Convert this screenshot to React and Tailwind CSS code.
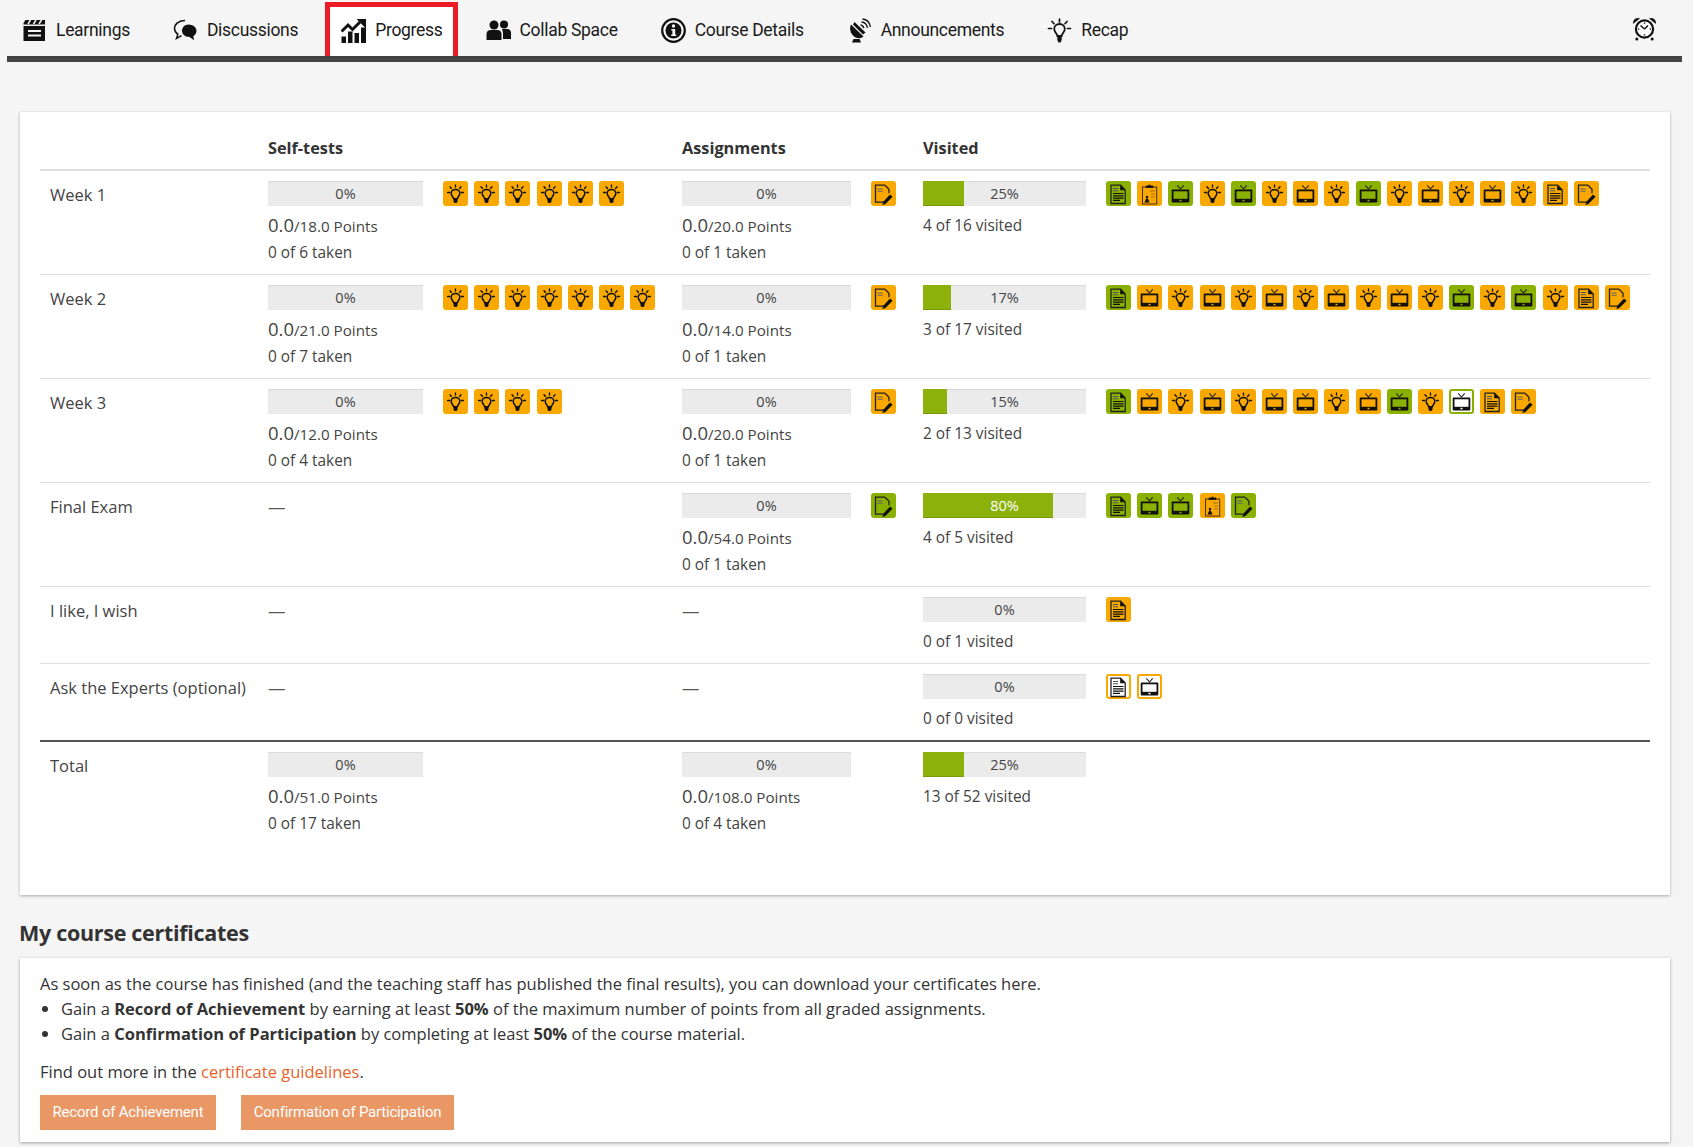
import React from 'react';

const BODY = "font-['Open_Sans',sans-serif]";

// tile colours: background plus an inset ring for the not yet available ones
const TILE = {
  o: 'bg-[#f9a800]',
  g: 'bg-[#8ab000]',
  w: 'bg-white shadow-[inset_0_0_0_2px_#f9a800]',
  x: 'bg-white shadow-[inset_0_0_0_2px_#8ab000]',
};

const Bulb = () => (
  <>
    <g stroke="#111" strokeWidth="1.3" strokeLinecap="round">
      <path d="M12.5 4v2.200M7 5.800l1.500 1.700M18 5.800l-1.500 1.700M4.500 11.500h2.300M18.200 11.500h2.300" />
    </g>
    <path d="M12.500 8.500c-2.500 0-4.300 1.800-4.300 3.900 0 2.300 2 3 2.400 5.300h3.800c.4-2.300 2.400-3 2.400-5.300 0-2.100-1.800-3.900-4.300-3.900z" fill="none" stroke="#111" strokeWidth="1.500" />
    <path d="M10.500 17.500h4v3l-1 1.500h-2l-1-1.500z" fill="#111" />
  </>
);

const Tv = ({ screen }) => (
  <>
    <path d="M9.300 4.300l3.200 3.700 3.200-3.700" fill="none" stroke="#222" strokeWidth="1.100" />
    <rect x="3.700" y="8.500" width="17.600" height="13" rx="1" fill="#111" />
    <rect x="5.500" y="10.300" width="14" height="7.500" fill={screen} />
    <rect x="11.500" y="18.800" width="2" height="1.500" fill={screen} />
  </>
);

const Doc = () => (
  <>
    <path d="M5 4.200h9.500L19.200 9v13.500H5z" fill="none" stroke="#222" strokeWidth="1.300" />
    <path d="M14.200 3.800l5.400 5.400h-5.400z" fill="#111" />
    <path d="M7 7.500h5M7 9.800h5" stroke="#555" strokeWidth="1.100" />
    <path d="M7 12.500h10.500M7 14.800h10.500M7 17.100h10.500M7 19.400h7" stroke="#111" strokeWidth="1.200" />
  </>
);

const Clip = () => (
  <>
    <rect x="5.500" y="6" width="14.200" height="17" fill="none" stroke="#4a3210" strokeWidth="1" />
    <path d="M9 6.500V5h2.300l1.200-1.300L13.700 5H16v1.500z" fill="#111" stroke="#111" strokeWidth=".8" />
    <path d="M13 10h5M14 13h4M14 16h4" stroke="#a8701a" strokeWidth="1" />
    <circle cx="10" cy="16" r="1.200" fill="#111" />
    <path d="M7.500 21.500l1.700-4h1.600l1.700 4z" fill="#111" />
  </>
);

const Pen = () => (
  <>
    <path d="M14 4.200H4.500v17h9M14 4.200l4 4v4" fill="none" stroke="#222" strokeWidth="1.300" />
    <path d="M6.500 8h5M6.500 10.300h5" stroke="#666" strokeWidth="1.100" />
    <path d="M19 13.500l2.600 2.200-7.200 7.200-3 1 .9-3.100z" fill="#111" />
  </>
);

function Tile({ code }) {
  const kind = code[0];
  const color = code[1];
  const screen = color === 'o' ? '#f9a800' : color === 'g' ? '#8ab000' : '#fff';
  return (
    <span className={`block w-[25px] h-[25px] shrink-0 rounded-[3px] ${TILE[color]}`}>
      <svg viewBox="0 0 25 25" className="w-[25px] h-[25px]">
        {kind === 'b' && <Bulb />}
        {kind === 't' && <Tv screen={screen} />}
        {kind === 'd' && <Doc />}
        {kind === 'c' && <Clip />}
        {kind === 'p' && <Pen />}
      </svg>
    </span>
  );
}

const Tiles = ({ list }) => (
  <div className="flex gap-[6.2px]">
    {list.split(' ').map((code, i) => <Tile key={i} code={code} />)}
  </div>
);

function Bar({ value, width }) {
  return (
    <div className={`relative h-[25px] bg-[#ebebeb] shadow-[inset_0_1px_1px_rgba(0,0,0,0.08)] ${width}`}>
      {value > 0 && <div className="h-full bg-[#8cb10a] shadow-[inset_0_-1px_0_rgba(0,0,0,0.12)]" style={{ width: `${value}%` }} />}
      <span className={`absolute inset-0 flex items-center justify-center text-[14.500px] ${value >= 50 ? 'text-white' : 'text-[#444]'}`}>{value}%</span>
    </div>
  );
}

function Cell({ data, boxWidth, barWidth }) {
  if (!data) {
    return <div className="pl-[10px] pt-[2px] leading-[25px] text-[17.500px] text-[#555]">—</div>;
  }
  return (
    <div className="pl-[10px] flex gap-5">
      <div className={boxWidth}>
        <Bar value={data.value} width={barWidth} />
        {data.points && (
          <div className="mt-[5px] h-[28px] leading-[27px] text-[15.200px] text-[#444] whitespace-nowrap">
            <span className="text-[18.500px]">{data.points[0]}</span>/{data.points[1]} Points
          </div>
        )}
        <div className={`h-[27px] leading-[27px] text-[15.400px] text-[#444] whitespace-nowrap ${data.points ? '' : 'mt-[6px]'}`}>{data.note}</div>
      </div>
      {data.tiles && <Tiles list={data.tiles} />}
    </div>
  );
}

const ROWS = [
  {
    label: 'Week 1',
    self: { value: 0, points: ['0.0', '18.0'], note: '0 of 6 taken', tiles: 'bo bo bo bo bo bo' },
    assign: { value: 0, points: ['0.0', '20.0'], note: '0 of 1 taken', tiles: 'po' },
    visited: { value: 25, note: '4 of 16 visited', tiles: 'dg co tg bo tg bo to bo tg bo to bo to bo do po' },
  },
  {
    label: 'Week 2',
    self: { value: 0, points: ['0.0', '21.0'], note: '0 of 7 taken', tiles: 'bo bo bo bo bo bo bo' },
    assign: { value: 0, points: ['0.0', '14.0'], note: '0 of 1 taken', tiles: 'po' },
    visited: { value: 17, note: '3 of 17 visited', tiles: 'dg to bo to bo to bo to bo to bo tg bo tg bo do po' },
  },
  {
    label: 'Week 3',
    self: { value: 0, points: ['0.0', '12.0'], note: '0 of 4 taken', tiles: 'bo bo bo bo' },
    assign: { value: 0, points: ['0.0', '20.0'], note: '0 of 1 taken', tiles: 'po' },
    visited: { value: 15, note: '2 of 13 visited', tiles: 'dg to bo to bo to to bo to tg bo tx do po' },
  },
  {
    label: 'Final Exam',
    assign: { value: 0, points: ['0.0', '54.0'], note: '0 of 1 taken', tiles: 'pg' },
    visited: { value: 80, note: '4 of 5 visited', tiles: 'dg tg tg co pg' },
  },
  {
    label: 'I like, I wish',
    visited: { value: 0, note: '0 of 1 visited', tiles: 'do' },
  },
  {
    label: 'Ask the Experts (optional)',
    visited: { value: 0, note: '0 of 0 visited', tiles: 'dw tw' },
  },
];

const TOTAL = {
  label: 'Total',
  self: { value: 0, points: ['0.0', '51.0'], note: '0 of 17 taken' },
  assign: { value: 0, points: ['0.0', '108.0'], note: '0 of 4 taken' },
  visited: { value: 25, note: '13 of 52 visited' },
};

const COLS = 'grid grid-cols-[218px_414px_241px_1fr]';

function Row({ row, className }) {
  return (
    <div className={`${COLS} pt-[10px] pb-[8px] ${className}`}>
      <div className="pl-[10px] pt-[1px] leading-[25px] text-[16.500px] text-[#444] whitespace-nowrap">{row.label}</div>
      <Cell data={row.self} boxWidth="w-[155px]" barWidth="w-[155px]" />
      <Cell data={row.assign} boxWidth="w-[169px]" barWidth="w-[169px]" />
      <Cell data={row.visited} boxWidth="w-[163px]" barWidth="w-[163px]" />
    </div>
  );
}

const NAV = [
  {
    label: 'Learnings',
    icon: (
      <>
        <path d="M1.500 5l2-3h19.500v4.500H1.500z" fill="#111" />
        <path d="M6 6l2.500-4M11.500 6L14 2M17 6l2.500-4" stroke="#f5f5f5" strokeWidth="1.500" />
        <rect x="1.500" y="8" width="21.500" height="15" fill="#111" />
        <path d="M6 13h13M6 17.500h13" stroke="#f5f5f5" strokeWidth="1.800" />
      </>
    ),
  },
  {
    label: 'Discussions',
    icon: (
      <>
        <path d="M12 2.500C6 2.500 1.500 6 1.500 10.500c0 2.300 1.300 4.300 3.300 5.700L3.500 20.500l5-2.800" fill="none" stroke="#111" strokeWidth="1.500" />
        <path d="M15.500 6.500c4.300 0 8 2.800 8 6.300 0 2.700-1.500 4.400-3.300 5.400l1 4-4.700-3.200c-4.300 0-7.500-2.800-7.500-6.200s3-6.300 6.500-6.300z" fill="#111" />
      </>
    ),
  },
  {
    label: 'Progress',
    icon: (
      <>
        <path d="M.500 13.500l6.500-6.500 4.500 4.500L19 4" fill="none" stroke="#111" strokeWidth="3" />
        <path d="M15.500 1H25v9.500z" fill="#111" />
        <path d="M.500 18.500h4.500V25H.500zM7 13.500h4.500V25H7zM13.500 15h4.500v10h-4.500zM20 9.500h5V25h-5z" fill="#111" />
      </>
    ),
  },
  {
    label: 'Collab Space',
    icon: (
      <>
        <circle cx="8" cy="7" r="4.500" fill="#111" />
        <circle cx="18" cy="6.500" r="4" fill="#111" />
        <path d="M.500 22v-6c0-2.500 2-4 4-4h7c2 0 4 1.500 4 4v6z" fill="#111" />
        <path d="M16 11h5c2.200 0 4 1.500 4 3.500V21h-8v-5c0-2-.6-3.500-1-5z" fill="#111" />
      </>
    ),
  },
  {
    label: 'Course Details',
    icon: (
      <>
        <circle cx="12.500" cy="12.500" r="11.300" fill="none" stroke="#111" strokeWidth="2.200" />
        <circle cx="12.500" cy="12.500" r="8" fill="#111" />
        <circle cx="12.500" cy="8" r="1.700" fill="#f5f5f5" />
        <path d="M10.300 11h3.900v5.500h1V18h-5v-1.500h1.200v-4h-1.100z" fill="#f5f5f5" />
      </>
    ),
  },
  {
    label: 'Announcements',
    icon: (
      <>
        <path d="M4 6.500l12.500 12c-2 2-5.500 2.200-8 1C4.500 17 1.500 12 4 6.500z" fill="#111" />
        <path d="M7.500 4l11 10.500-2.500 2L6 6.500z" fill="#111" />
        <path d="M6.500 21h6l1.500 3.500H5z" fill="#111" />
        <path d="M13.500 7c1.500.2 3 1.500 3.300 3.200M14.500 4c3 .3 5.500 2.700 6 6M15.500 1c4.200.5 7.300 3.700 8 8" fill="none" stroke="#111" strokeWidth="1.300" />
      </>
    ),
  },
  {
    label: 'Recap',
    icon: (
      <>
        <path d="M12.500 1v3M5 3.500l2 2.200M20 3.500l-2 2.200M1.500 10.500h3M20.500 10.500h3" stroke="#111" strokeWidth="1.700" strokeLinecap="round" />
        <path d="M12.500 6c-3 0-5.300 2.200-5.300 5 0 3 2.800 4.500 3.200 7h4.200c.4-2.500 3.200-4 3.200-7 0-2.800-2.300-5-5.300-5z" fill="none" stroke="#111" strokeWidth="1.800" />
        <path d="M10.300 18.500h4.400v3.500L13.500 24.500h-2L10.300 22z" fill="#111" />
      </>
    ),
  },
];

function NavItem({ item, active }) {
  return (
    <div className={`flex items-center gap-[9px] h-[54px] pb-[3px] pl-[11px] pr-[10px] border-[5px] border-b-0 ${active ? 'border-[#ed1c24] bg-white' : 'border-transparent'}`}>
      <svg viewBox="0 0 25 25" className="w-[25px] h-[25px]">{item.icon}</svg>
      <span className="text-[17.500px] tracking-[-0.3px] text-[#1a1a1a] font-['Roboto',sans-serif] whitespace-nowrap">{item.label}</span>
    </div>
  );
}

export default function App() {
  return (
    <div className={`min-h-[1147px] bg-[#f5f5f5] text-[#333] ${BODY}`}>
      <nav className="ml-[7px] mr-[11px] pt-[2px] h-[62px] border-b-[6px] border-[#444] flex justify-between">
        <div className="flex gap-[12px] -ml-px">
          {NAV.map(item => <NavItem key={item.label} item={item} active={item.label === 'Progress'} />)}
        </div>
        <div className="pr-[25px] pt-[14px]">
          <svg viewBox="0 0 25 25" className="w-[25px] h-[25px]">
            <path d="M1 8a5 5 0 0 1 7-5.500zM24 8a5 5 0 0 0-7-5.500z" fill="#111" />
            <circle cx="12.500" cy="13" r="8.600" fill="#fff" stroke="#111" strokeWidth="2.200" />
            <path d="M12.500 13L8.500 9.500M12.500 13l3.500-3.500" stroke="#111" strokeWidth="1.500" />
            <path d="M12.500 6.500v1.200M12.500 18.300v1.200M6 13h1.200M17.800 13H19" stroke="#111" strokeWidth="1.500" />
            <circle cx="4.800" cy="23" r="1.500" fill="#111" />
            <circle cx="20.200" cy="23" r="1.500" fill="#111" />
          </svg>
        </div>
      </nav>

      <div className="ml-[20px] mr-[23px]">
        <section className="mt-[50px] h-[783px] bg-white shadow-[0_1px_3px_rgba(0,0,0,0.3)] pl-[20px] pr-[20px]">
          <div className={`${COLS} pt-[24px] pb-[9px] border-b-2 border-[#ddd] text-[16.300px] leading-[24px] font-bold text-[#333]`}>
            <div />
            <div className="pl-[10px]">Self-tests</div>
            <div className="pl-[10px]">Assignments</div>
            <div className="pl-[10px]">Visited</div>
          </div>
          {ROWS.map((row, i) => (
            <Row key={row.label} row={row} className={i === ROWS.length - 1 ? 'border-b-2 border-[#555]' : 'border-b border-[#ddd]'} />
          ))}
          <Row row={TOTAL} />
        </section>

        <h2 className="mt-[23px] -ml-px text-[21.500px] tracking-[-0.3px] leading-[30px] font-bold text-[#333]">My course certificates</h2>

        <section className="mt-[10px] h-[184px] bg-white shadow-[0_1px_3px_rgba(0,0,0,0.35)] px-[20px] pt-[13px] text-[16.500px] leading-[25px] text-[#333]">
          <p>As soon as the course has finished (and the teaching staff has published the final results), you can download your certificates here.</p>
          <ul className="list-disc pl-[21px]">
            <li>Gain a <strong>Record of Achievement</strong> by earning at least <strong>50%</strong> of the maximum number of points from all graded assignments.</li>
            <li>Gain a <strong>Confirmation of Participation</strong> by completing at least <strong>50%</strong> of the course material.</li>
          </ul>
          <p className="mt-[13px]">Find out more in the <a className="text-[#e8632a]">certificate guidelines</a>.</p>
          <div className="mt-[11px] flex gap-[25px]">
            <button className="h-[35px] w-[176px] bg-[#ea9766] text-white text-[15px] tracking-[-0.2px] font-['Roboto',sans-serif]">Record of Achievement</button>
            <button className="h-[35px] w-[213px] bg-[#ea9766] text-white text-[15px] tracking-[-0.2px] font-['Roboto',sans-serif]">Confirmation of Participation</button>
          </div>
        </section>
      </div>
    </div>
  );
}
